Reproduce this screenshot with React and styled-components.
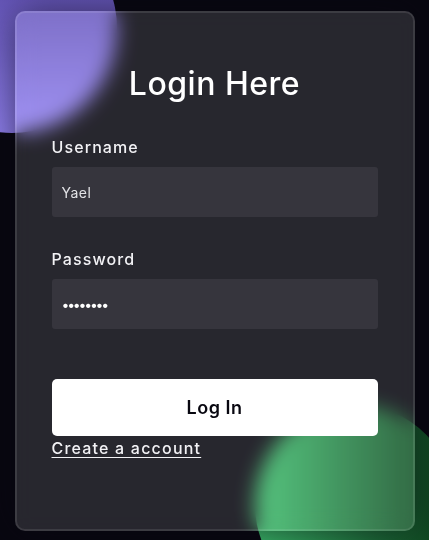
import React, { useState } from 'react';
import styled, { createGlobalStyle } from 'styled-components';

const GlobalStyle = createGlobalStyle`
  * {
    box-sizing: border-box;
    margin: 0;
    padding: 0;
  }
  html, body {
    background-color: #080710;
    overflow: hidden;
  }
  body {
    font-family: 'Inter', 'Noto Sans', sans-serif;
    color: #ffffff;
  }
`;

const Page = styled.div`
  position: relative;
  width: 100vw;
  height: 100vh;
  display: flex;
  align-items: center;
  justify-content: center;
  overflow: hidden;
`;

// decorative blobs behind the glass card
const Shape = styled.div`
  position: absolute;
  width: ${(p) => p.size}px;
  height: ${(p) => p.size}px;
  border-radius: 50%;
  background: ${(p) => p.bg};
  left: ${(p) => p.left}px;
  top: ${(p) => p.top}px;
`;

const Form = styled.form`
  position: relative;
  z-index: 1;
  width: 400px;
  height: 520px;
  margin-top: 2px;
  padding: 50px 35px;
  background-color: rgba(255, 255, 255, 0.13);
  border: 2px solid rgba(255, 255, 255, 0.1);
  border-radius: 10px;
  backdrop-filter: blur(10px);
  box-shadow: 0 0 40px rgba(8, 7, 16, 0.6);
  display: flex;
  flex-direction: column;
  letter-spacing: 0.5px;
`;

const Title = styled.h3`
  font-size: 32px;
  font-weight: 500;
  line-height: 42px;
  text-align: center;
  color: #ffffff;
`;

const Label = styled.label`
  display: block;
  margin-top: 30px;
  font-size: 16px;
  font-weight: 500;
  line-height: 24px;
  color: #f2f2f5;
  letter-spacing: 1.1px;
`;

const Input = styled.input`
  display: block;
  height: 50px;
  width: 100%;
  margin-top: 8px;
  padding: 0 10px;
  background-color: rgba(255, 255, 255, 0.07);
  border: none;
  outline: none;
  border-radius: 3px;
  font-family: inherit;
  font-size: 14px;
  font-weight: 400;
  letter-spacing: ${(p) => (p.type === 'password' ? '-2.2px' : '0.5px')};
  color: ${(p) => (p.type === 'password' ? '#ffffff' : '#e2e2e6')};
`;

const Button = styled.button`
  margin-top: 50px;
  width: 100%;
  padding: 15px 0;
  background-color: #ffffff;
  color: #080710;
  border: none;
  border-radius: 5px;
  font-family: inherit;
  font-size: 18px;
  font-weight: 600;
  line-height: 27px;
  letter-spacing: 0.5px;
  cursor: pointer;
`;

const Link = styled.a`
  align-self: flex-start;
  font-size: 16px;
  font-weight: 500;
  line-height: 24px;
  color: #f2f2f5;
  letter-spacing: 1.2px;
  text-decoration: underline;
  text-underline-offset: 3px;
  cursor: pointer;
`;

export default function App() {
  const [username, setUsername] = useState('Yael');
  const [password, setPassword] = useState('12345678');

  return (
    <Page>
      <GlobalStyle />
      <Shape
        size={210}
        left={-93}
        top={-77}
        bg="linear-gradient(#4f3f9c, #9282f2)"
      />
      <Shape
        size={200}
        left={255}
        top={405}
        bg="linear-gradient(to right, #3cbd6c, #0a3a18)"
      />
      <Form onSubmit={(e) => e.preventDefault()}>
        <Title>Login Here</Title>

        <Label htmlFor="username">Username</Label>
        <Input
          id="username"
          type="text"
          value={username}
          onChange={(e) => setUsername(e.target.value)}
        />

        <Label htmlFor="password">Password</Label>
        <Input
          id="password"
          type="password"
          value={password}
          onChange={(e) => setPassword(e.target.value)}
        />

        <Button type="submit">Log In</Button>
        <Link>Create a account</Link>
      </Form>
    </Page>
  );
}
